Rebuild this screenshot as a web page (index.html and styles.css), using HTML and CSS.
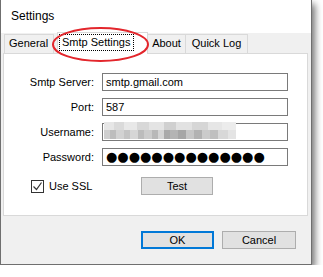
FILE: index.html
```html
<!DOCTYPE html>
<html lang="en">
<head>
    <meta charset="UTF-8">
    <title>Settings</title>
    <link rel="stylesheet" href="styles.css">
</head>
<body>
    <div class="window">
        <div class="titlebar">Settings</div>
        <div class="client">
            <div class="tabs">
                <div class="tab tab-general">General</div>
                <div class="tab tab-smtp active"><span class="focus">Smtp Settings</span></div>
                <div class="tab tab-about">About</div>
                <div class="tab tab-log">Quick Log</div>
            </div>
            <div class="panel">
                <div class="form">
                    <label>Smtp Server:</label>
                    <div class="field">smtp.gmail.com</div>
                    <label>Port:</label>
                    <div class="field">587</div>
                    <label>Username:</label>
                    <div class="field"><span class="blur"></span></div>
                    <label>Password:</label>
                    <div class="field dots">●●●●●●●●●●●●●●</div>
                </div>
                <div class="ssl-row">
                    <div class="check">
                        <span class="box">
                            <svg width="11" height="11" viewBox="0 0 11 11"><path d="M1.5 5.5 L4.5 8.5 L9.5 1.5" fill="none" stroke="#333" stroke-width="1.2"/></svg>
                        </span>
                        <span>Use SSL</span>
                    </div>
                    <button class="btn btn-test">Test</button>
                </div>
            </div>
            <div class="footer">
                <button class="btn btn-ok">OK</button>
                <button class="btn btn-cancel">Cancel</button>
            </div>
        </div>
        <svg class="highlight" width="100" height="36" viewBox="0 0 100 36">
            <ellipse cx="48.5" cy="17.5" rx="47.5" ry="16.5" fill="none" stroke="#e3262c" stroke-width="2"/>
        </svg>
    </div>
</body>
</html>
```

FILE: styles.css
```css
body { margin: 0; background: #ffffff; font-family: "Liberation Sans", Arial, sans-serif; font-size: 11px; color: #000; }
.window { position: relative; width: 310px; height: 264px; border: 1px solid #6f6f6f; border-top: none; box-shadow: 3px 4px 7px rgba(0, 0, 0, 0.55); background: #f0f0f0; }
.titlebar { height: 33px; line-height: 33px; background: #fff; padding-left: 10px; font-size: 12px; }
.client { height: 231px; padding: 0 3px 0 2px; }
.tabs { display: flex; align-items: flex-end; height: 20px; position: relative; z-index: 1; }
.tab { height: 18px; line-height: 17px; border: 1px solid #d9d9d9; border-bottom: none; background: #f0f0f0; box-sizing: content-box; }
.tab-general { margin-left: 1px; width: 44px; padding-left: 4px; }
.tab-smtp { margin-left: 3px; width: 87px; }
.tab-about { width: 37px; text-align: center; border-left: none; }
.tab-log { margin-left: -1px; width: 61px; text-align: center; }
.active { background: #fff; height: 21px; margin-bottom: -1px; padding: 0 0 0 2px; }
.focus { display: inline-block; margin-top: 2px; height: 15px; line-height: 15px; padding: 0 3px 0 2px; outline: 1px dotted #000; outline-offset: 0; }
.panel { height: 161px; background: #fff; border: 1px solid #d9d9d9; }
.form { display: grid; grid-template-columns: 90px 186px; column-gap: 8px; row-gap: 7px; padding-top: 19px; align-items: center; }
.form label { text-align: right; }
.field { height: 16px; line-height: 16px; border: 1px solid #7a7a7a; padding-left: 3px; background: #fff; overflow: visible; }
.blur { display: block; margin: -2px 0 0 -2px; width: 132px; height: 17px;
    background:
        linear-gradient(90deg, #e6e6e6 0 10px, #dadada 10px 20px, #e8e8e8 20px 33px, #d8d8d8 33px 45px, #e4e4e4 45px 60px, #d0d0d0 60px 72px, #e2e2e2 72px 88px, #d6d6d6 88px 104px, #e6e6e6 104px 118px, #ececec 118px 132px) top / 100% 8px no-repeat,
        linear-gradient(90deg, #cfcfcf 0 6px, #bdbdbd 6px 12px, #d2d2d2 12px 20px, #c4c4c4 20px 26px, #d6d6d6 26px 34px, #bcbcbc 34px 40px, #cccccc 40px 48px, #b8b8b8 48px 54px, #d4d4d4 54px 60px, #a9a9a9 60px 66px, #b4b4b4 66px 74px, #a6a6a6 74px 82px, #c6c6c6 82px 90px, #b2b2b2 90px 98px, #cbcbcb 98px 106px, #bfbfbf 106px 114px, #d8d8d8 114px 124px, #e4e4e4 124px 132px) bottom / 100% 9px no-repeat; }
.dots { font-family: "DejaVu Sans", sans-serif; font-size: 13px; letter-spacing: 0; line-height: 16px; }
.ssl-row { display: flex; align-items: center; margin-top: 11px; height: 18px; }
.check { display: flex; align-items: center; width: 110px; margin-left: 27px; font-size: 11px; }
.box { width: 11px; height: 11px; border: 1px solid #333; background: #fff; margin-right: 5px; display: flex; }
.btn { font-family: "Liberation Sans", Arial, sans-serif; font-size: 11px; color: #000; background: #e1e1e1; border: 1px solid #adadad; padding: 0; margin: 0; height: 18px; }
.btn-test { width: 72px; }
.footer { display: flex; justify-content: flex-end; gap: 8px; padding: 15px 12px 0 0; }
.btn-ok { width: 73px; border: 2px solid #0078d7; }
.btn-cancel { width: 74px; }
.highlight { position: absolute; left: 51px; top: 27px; z-index: 2; }
```
